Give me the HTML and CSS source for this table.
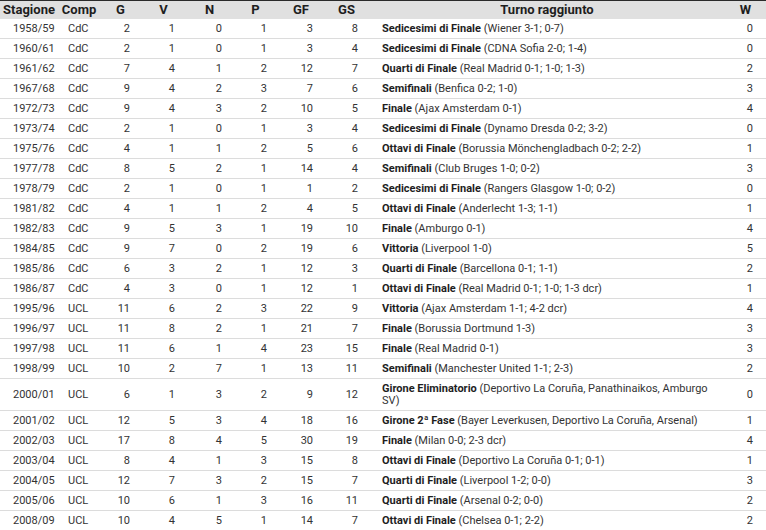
FILE: index.html
```html
<!DOCTYPE html>
<html lang="it">
<head>
<meta charset="utf-8">
<title>Statistiche</title>
<link rel="stylesheet" href="styles.css">
</head>
<body>
<table class="stats">
<colgroup>
<col class="c-season"><col class="c-comp"><col class="c-n1"><col class="c-n2"><col class="c-n3"><col class="c-n4"><col class="c-n5"><col class="c-n6"><col class="c-turno"><col class="c-w">
</colgroup>
<thead>
<tr><th>Stagione</th><th>Comp</th><th>G</th><th>V</th><th>N</th><th>P</th><th>GF</th><th>GS</th><th>Turno raggiunto</th><th>W</th></tr>
</thead>
<tbody>
<tr><td class="season">1958/59</td><td class="comp">CdC</td><td class="num">2</td><td class="num">1</td><td class="num">0</td><td class="num">1</td><td class="num">3</td><td class="num">8</td><td class="turno"><b>Sedicesimi di Finale</b> (Wiener 3-1; 0-7)</td><td class="num w">0</td></tr>
<tr><td class="season">1960/61</td><td class="comp">CdC</td><td class="num">2</td><td class="num">1</td><td class="num">0</td><td class="num">1</td><td class="num">3</td><td class="num">4</td><td class="turno"><b>Sedicesimi di Finale</b> (CDNA Sofia 2-0; 1-4)</td><td class="num w">0</td></tr>
<tr><td class="season">1961/62</td><td class="comp">CdC</td><td class="num">7</td><td class="num">4</td><td class="num">1</td><td class="num">2</td><td class="num">12</td><td class="num">7</td><td class="turno"><b>Quarti di Finale</b> (Real Madrid 0-1; 1-0; 1-3)</td><td class="num w">2</td></tr>
<tr><td class="season">1967/68</td><td class="comp">CdC</td><td class="num">9</td><td class="num">4</td><td class="num">2</td><td class="num">3</td><td class="num">7</td><td class="num">6</td><td class="turno"><b>Semifinali</b> (Benfica 0-2; 1-0)</td><td class="num w">3</td></tr>
<tr><td class="season">1972/73</td><td class="comp">CdC</td><td class="num">9</td><td class="num">4</td><td class="num">3</td><td class="num">2</td><td class="num">10</td><td class="num">5</td><td class="turno"><b>Finale</b> (Ajax Amsterdam 0-1)</td><td class="num w">4</td></tr>
<tr><td class="season">1973/74</td><td class="comp">CdC</td><td class="num">2</td><td class="num">1</td><td class="num">0</td><td class="num">1</td><td class="num">3</td><td class="num">4</td><td class="turno"><b>Sedicesimi di Finale</b> (Dynamo Dresda 0-2; 3-2)</td><td class="num w">0</td></tr>
<tr><td class="season">1975/76</td><td class="comp">CdC</td><td class="num">4</td><td class="num">1</td><td class="num">1</td><td class="num">2</td><td class="num">5</td><td class="num">6</td><td class="turno"><b>Ottavi di Finale</b> (Borussia Mönchengladbach 0-2; 2-2)</td><td class="num w">1</td></tr>
<tr><td class="season">1977/78</td><td class="comp">CdC</td><td class="num">8</td><td class="num">5</td><td class="num">2</td><td class="num">1</td><td class="num">14</td><td class="num">4</td><td class="turno"><b>Semifinali</b> (Club Bruges 1-0; 0-2)</td><td class="num w">3</td></tr>
<tr><td class="season">1978/79</td><td class="comp">CdC</td><td class="num">2</td><td class="num">1</td><td class="num">0</td><td class="num">1</td><td class="num">1</td><td class="num">2</td><td class="turno"><b>Sedicesimi di Finale</b> (Rangers Glasgow 1-0; 0-2)</td><td class="num w">0</td></tr>
<tr><td class="season">1981/82</td><td class="comp">CdC</td><td class="num">4</td><td class="num">1</td><td class="num">1</td><td class="num">2</td><td class="num">4</td><td class="num">5</td><td class="turno"><b>Ottavi di Finale</b> (Anderlecht 1-3; 1-1)</td><td class="num w">1</td></tr>
<tr><td class="season">1982/83</td><td class="comp">CdC</td><td class="num">9</td><td class="num">5</td><td class="num">3</td><td class="num">1</td><td class="num">19</td><td class="num">10</td><td class="turno"><b>Finale</b> (Amburgo 0-1)</td><td class="num w">4</td></tr>
<tr><td class="season">1984/85</td><td class="comp">CdC</td><td class="num">9</td><td class="num">7</td><td class="num">0</td><td class="num">2</td><td class="num">19</td><td class="num">6</td><td class="turno"><b>Vittoria</b> (Liverpool 1-0)</td><td class="num w">5</td></tr>
<tr><td class="season">1985/86</td><td class="comp">CdC</td><td class="num">6</td><td class="num">3</td><td class="num">2</td><td class="num">1</td><td class="num">12</td><td class="num">3</td><td class="turno"><b>Quarti di Finale</b> (Barcellona 0-1; 1-1)</td><td class="num w">2</td></tr>
<tr><td class="season">1986/87</td><td class="comp">CdC</td><td class="num">4</td><td class="num">3</td><td class="num">0</td><td class="num">1</td><td class="num">12</td><td class="num">1</td><td class="turno"><b>Ottavi di Finale</b> (Real Madrid 0-1; 1-0; 1-3 dcr)</td><td class="num w">1</td></tr>
<tr><td class="season">1995/96</td><td class="comp">UCL</td><td class="num">11</td><td class="num">6</td><td class="num">2</td><td class="num">3</td><td class="num">22</td><td class="num">9</td><td class="turno"><b>Vittoria</b> (Ajax Amsterdam 1-1; 4-2 dcr)</td><td class="num w">4</td></tr>
<tr><td class="season">1996/97</td><td class="comp">UCL</td><td class="num">11</td><td class="num">8</td><td class="num">2</td><td class="num">1</td><td class="num">21</td><td class="num">7</td><td class="turno"><b>Finale</b> (Borussia Dortmund 1-3)</td><td class="num w">3</td></tr>
<tr><td class="season">1997/98</td><td class="comp">UCL</td><td class="num">11</td><td class="num">6</td><td class="num">1</td><td class="num">4</td><td class="num">23</td><td class="num">15</td><td class="turno"><b>Finale</b> (Real Madrid 0-1)</td><td class="num w">3</td></tr>
<tr><td class="season">1998/99</td><td class="comp">UCL</td><td class="num">10</td><td class="num">2</td><td class="num">7</td><td class="num">1</td><td class="num">13</td><td class="num">11</td><td class="turno"><b>Semifinali</b> (Manchester United 1-1; 2-3)</td><td class="num w">2</td></tr>
<tr><td class="season">2000/01</td><td class="comp">UCL</td><td class="num">6</td><td class="num">1</td><td class="num">3</td><td class="num">2</td><td class="num">9</td><td class="num">12</td><td class="turno"><b>Girone Eliminatorio</b> <span>(Deportivo La Coruña, Panathinaikos, Amburgo</span> <span>SV)</span></td><td class="num w">0</td></tr>
<tr><td class="season">2001/02</td><td class="comp">UCL</td><td class="num">12</td><td class="num">5</td><td class="num">3</td><td class="num">4</td><td class="num">18</td><td class="num">16</td><td class="turno"><b>Girone 2ª Fase</b> (Bayer Leverkusen, Deportivo La Coruña, Arsenal)</td><td class="num w">1</td></tr>
<tr><td class="season">2002/03</td><td class="comp">UCL</td><td class="num">17</td><td class="num">8</td><td class="num">4</td><td class="num">5</td><td class="num">30</td><td class="num">19</td><td class="turno"><b>Finale</b> (Milan 0-0; 2-3 dcr)</td><td class="num w">4</td></tr>
<tr><td class="season">2003/04</td><td class="comp">UCL</td><td class="num">8</td><td class="num">4</td><td class="num">1</td><td class="num">3</td><td class="num">15</td><td class="num">8</td><td class="turno"><b>Ottavi di Finale</b> (Deportivo La Coruña 0-1; 0-1)</td><td class="num w">1</td></tr>
<tr><td class="season">2004/05</td><td class="comp">UCL</td><td class="num">12</td><td class="num">7</td><td class="num">3</td><td class="num">2</td><td class="num">15</td><td class="num">7</td><td class="turno"><b>Quarti di Finale</b> (Liverpool 1-2; 0-0)</td><td class="num w">3</td></tr>
<tr><td class="season">2005/06</td><td class="comp">UCL</td><td class="num">10</td><td class="num">6</td><td class="num">1</td><td class="num">3</td><td class="num">16</td><td class="num">11</td><td class="turno"><b>Quarti di Finale</b> (Arsenal 0-2; 0-0)</td><td class="num w">2</td></tr>
<tr><td class="season">2008/09</td><td class="comp">UCL</td><td class="num">10</td><td class="num">4</td><td class="num">5</td><td class="num">1</td><td class="num">14</td><td class="num">7</td><td class="turno"><b>Ottavi di Finale</b> (Chelsea 0-1; 2-2)</td><td class="num w">2</td></tr>
</tbody>
</table>
</body>
</html>
```

FILE: styles.css
```css
html, body {
  margin: 0;
  padding: 0;
  background: #ffffff;
}

body {
  font-family: Roboto, "Noto Sans", "Liberation Sans", sans-serif;
  color: #333333;
}

.stats {
  width: 766px;
  border-collapse: collapse;
  table-layout: fixed;
  border-top: 1px solid #2a2a2a;
}

.c-season { width: 58px; }
.c-comp { width: 42px; }
.c-n1 { width: 41px; }
.c-n2 { width: 45px; }
.c-n3 { width: 47px; }
.c-n4 { width: 45px; }
.c-n5 { width: 46px; }
.c-n6 { width: 45px; }
.c-turno { width: 356px; }
.c-w { width: 41px; }

.stats th {
  height: 18px;
  padding: 0;
  background: #e0e0e0;
  font-size: 13px;
  font-weight: 700;
  line-height: 18px;
  color: #1e1e1e;
  text-align: center;
  white-space: nowrap;
}

.stats td {
  padding: 4px 0 3px 0;
  font-size: 11px;
  line-height: 12px;
  border-bottom: 1px solid #dcdcdc;
  vertical-align: middle;
}

.stats td.season {
  padding-left: 13px;
}

.stats td.comp {
  padding-left: 10px;
}

.stats td.num {
  text-align: right;
  padding-right: 11px;
}

.stats td.w {
  padding-right: 13px;
}

.stats td.turno {
  padding-left: 13px;
  padding-right: 12px;
}

.turno b {
  font-weight: 700;
  color: #1e1e1e;
}
```
